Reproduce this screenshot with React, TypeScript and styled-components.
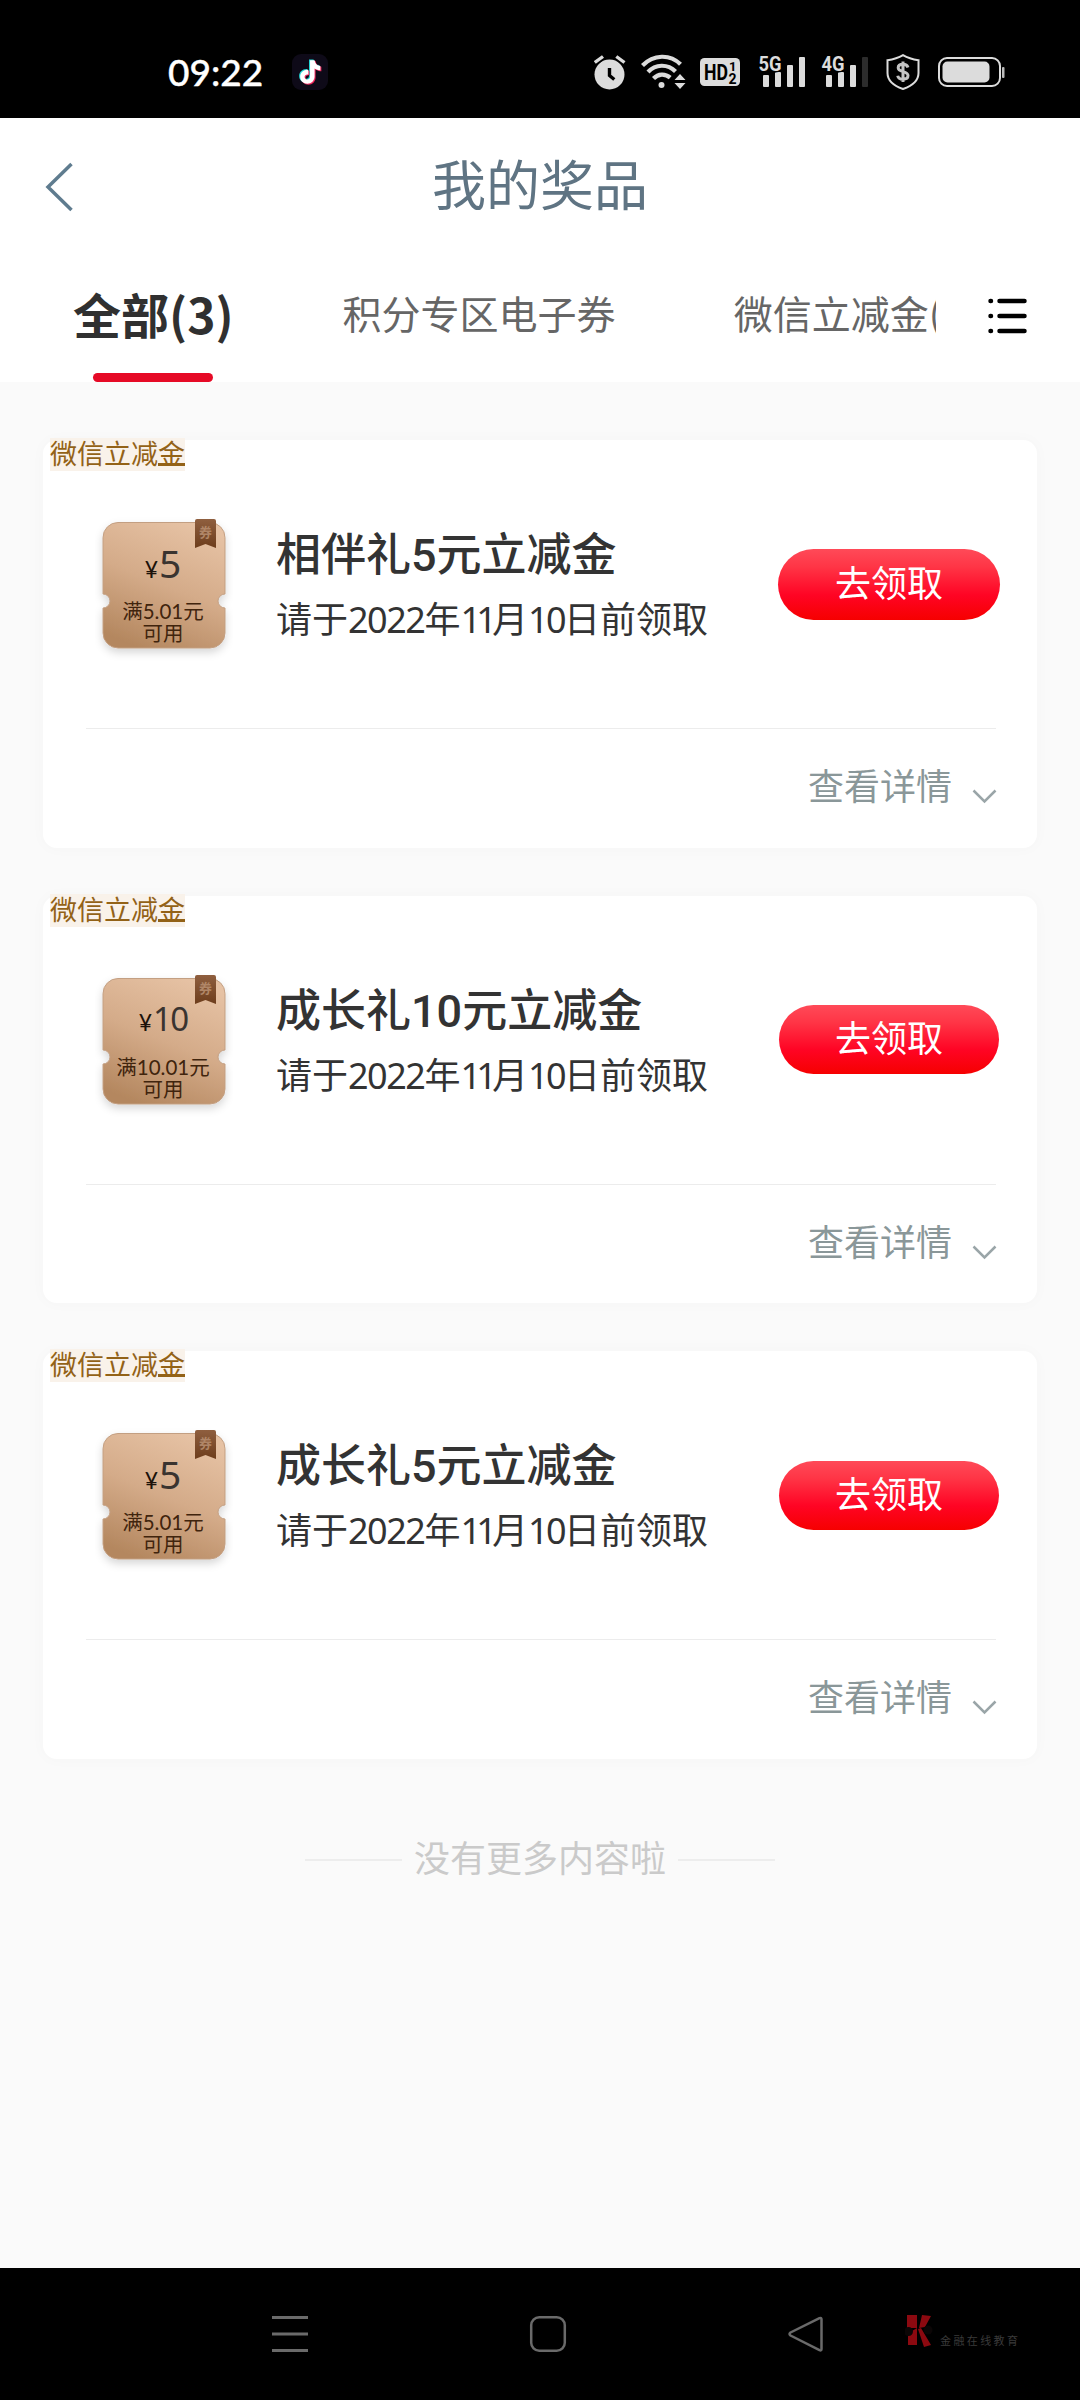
import React from "react";
import styled, { createGlobalStyle } from "styled-components";

const cjk = `"Noto Sans CJK SC", sans-serif`;

const GlobalStyle = createGlobalStyle`
  * { box-sizing: border-box; }
  body {
    margin: 0;
    background: #fafafa;
    font-family: Lato, ${cjk};
  }
`;

const Screen = styled.div`
  width: 1080px;
  height: 2400px;
  display: flex;
  flex-direction: column;
  overflow: hidden;
  background: #fafafa;
`;

/* ---------- status bar ---------- */

const StatusBar = styled.header`
  height: 118px;
  flex: none;
  display: flex;
  align-items: center;
  padding: 26px 75px 0 168px;
  background: #000;
`;

const Clock = styled.span`
  width: 124px;
  font: 500 37px/36px Lato, ${cjk};
  -webkit-text-stroke: 0.4px #fff;
  color: #fff;
`;

const StatusIcons = styled.div`
  margin-left: auto;
  display: flex;
  align-items: center;
`;

const StatusSlot = styled.span<{ $gap: number }>`
  display: flex;
  margin-left: ${(p) => p.$gap}px;
`;

const SignalArt = styled.svg`
  overflow: visible;
`;

/* ---------- title bar and tabs ---------- */

const TitleBar = styled.div`
  height: 138px;
  flex: none;
  display: grid;
  grid-template-columns: 120px 1fr 120px;
  align-items: center;
  background: #fff;
`;

const BackButton = styled.button`
  display: flex;
  padding: 0 0 0 44px;
  border: 0;
  background: none;
`;

const PageTitle = styled.h1`
  margin: 0;
  padding-bottom: 8px;
  text-align: center;
  font: 400 54px/60px ${cjk};
  color: #5f7483;
`;

const TabBar = styled.nav`
  height: 126px;
  flex: none;
  display: flex;
  background: #fff;
`;

const TabScroller = styled.div`
  width: 936px;
  display: flex;
  overflow: hidden;
  padding-left: 73px;
`;

const Tab = styled.div<{ $active?: boolean; $gap?: number }>`
  flex: none;
  display: flex;
  flex-direction: column;
  align-items: center;
  justify-content: space-between;
  margin-left: ${(p) => p.$gap ?? 0}px;
  padding-top: ${(p) => (p.$active ? 27 : 26)}px;
  white-space: nowrap;
  font-family: ${cjk};
  font-weight: ${(p) => (p.$active ? 700 : 400)};
  font-size: ${(p) => (p.$active ? 48 : 39)}px;
  line-height: 60px;
  color: ${(p) => (p.$active ? "#303030" : "#666")};
`;

const TabMarker = styled.span`
  width: 120px;
  height: 9px;
  border-radius: 5px;
  background: #e60a26;
`;

const ListButton = styled.button`
  display: flex;
  align-items: flex-start;
  padding: 41px 0 0 51px;
  border: 0;
  background: none;
`;

/* ---------- prize cards ---------- */

const Content = styled.main`
  flex: 1;
  display: flex;
  flex-direction: column;
  padding: 58px 43px 0;
`;

const CardList = styled.div`
  display: flex;
  flex-direction: column;
  gap: 48px;
`;

const Card = styled.article`
  height: 407.5px;
  display: flex;
  flex-direction: column;
  border-radius: 14px;
  background: #fff;
  box-shadow: 0 0 14px 2px rgba(0, 0, 0, 0.018);
`;

const Tag = styled.span`
  align-self: flex-start;
  height: 33px;
  margin: -2px 0 0 7px;
  background: #f9f2ea;
  font: 400 27px/29px ${cjk};
  color: #936217;
`;

const TagEnd = styled.span`
  text-decoration: underline;
  text-decoration-thickness: 3px;
  text-underline-offset: -1px;
  text-decoration-skip-ink: none;
`;

const CardBody = styled.div`
  height: 257px;
  display: flex;
  padding: 0 37px 0 52px;
`;

const Coupon = styled.div`
  position: relative;
  width: 138px;
  height: 150px;
  margin-top: 44px;
  flex: none;
`;

const CouponArt = styled.svg`
  position: absolute;
  inset: 0;
`;

const CouponText = styled.div`
  position: relative;
  display: flex;
  flex-direction: column;
  align-items: center;
  padding: 25px 2px 0 0;
`;

const Amount = styled.div`
  height: 60px;
  display: flex;
  align-items: baseline;
  color: #3a3430;
`;

const Yen = styled.span`
  font: 400 23px/46px Lato, ${cjk};
  color: #1c120a;
`;

const Value = styled.span<{ $size: number; $tight: number }>`
  margin-left: 1px;
  font: 400 ${(p) => p.$size}px/46px "Noto Sans", ${cjk};
  letter-spacing: ${(p) => p.$tight}px;
`;

const Condition = styled.div`
  text-align: center;
  white-space: nowrap;
  font: 400 20.5px/22px Lato, ${cjk};
  color: #40240d;
`;

const Info = styled.div`
  flex: 1;
  padding: 53px 0 0 43px;
  white-space: nowrap;
`;

const PrizeName = styled.h2`
  margin: 0;
  font: 500 45px/64px Roboto, ${cjk};
  color: #333;
`;

const Deadline = styled.p`
  margin: 0;
  font: 400 36px/58px ${cjk};
  color: #333;
`;

const Digits = styled.span<{ $tight: number }>`
  font-family: "Noto Sans", ${cjk};
  letter-spacing: ${(p) => p.$tight}px;
`;

const ClaimButton = styled.button<{ $inset: number }>`
  flex: none;
  width: ${(p) => 222 - p.$inset * 2}px;
  height: ${(p) => 71 - p.$inset * 2}px;
  margin: ${(p) => 78 + p.$inset * 0.5}px ${(p) => p.$inset}px 0 0;
  padding: 0 0 7px;
  border: 0;
  border-radius: 36px;
  background: linear-gradient(#ff4a58 0%, #ff3546 25%, #ff0424 65%, #f60000 100%);
  font: 400 36px/60px ${cjk};
  color: #fff;
`;

const CardFooter = styled.div`
  flex: 1;
  display: flex;
  align-items: flex-start;
  justify-content: flex-end;
  margin: 0 41px 0 43px;
  padding-top: 25px;
  border-top: 1px solid #ececec;
  font: 400 36px/60px ${cjk};
  color: #8a9799;
`;

const Chevron = styled.svg`
  margin: 35px -1px 0 20px;
`;

const EndNote = styled.div`
  display: flex;
  align-items: center;
  justify-content: center;
  gap: 12px;
  margin-top: 67px;
  font: 400 36px/60px ${cjk};
  color: #cacaca;

  &::before,
  &::after {
    content: "";
    width: 97px;
    height: 2px;
    margin-top: 8px;
    background: #ededed;
  }
`;

/* ---------- system navigation ---------- */

const NavBar = styled.footer`
  height: 132px;
  flex: none;
  display: flex;
  align-items: flex-start;
  padding: 47px 0 0 271px;
  background: #000;
`;

const NavSlot = styled.span<{ $gap: number }>`
  display: flex;
  margin-left: ${(p) => p.$gap}px;
`;

const Watermark = styled.span`
  display: flex;
  margin-left: 79px;
  font: 400 11px/14px ${cjk};
  letter-spacing: 2.4px;
  color: #3a3a3a;
`;

const WatermarkText = styled.span`
  margin: 18px 0 0 7px;
`;

/* ---------- drawings ---------- */

const note =
  "M18 8h4.4c.5 3.3 2.4 5.2 5.6 5.5v4.3c-2.100 0-4-.6-5.600-1.700v7.800c0 4-3.100 7-7 7s-7-3-7-6.800c0-4 3.500-7.200 8-6.700v4.500c-2-.5-3.700.6-3.700 2.300 0 1.500 1.200 2.500 2.600 2.500 1.600 0 2.700-1.100 2.700-2.900z";

const MusicApp = () => (
  <svg width="36" height="36" viewBox="0 0 36 36">
    <rect width="36" height="36" rx="9" fill="#0e0a18" />
    <g transform="translate(-.5 -2) scale(1.03)">
      <path d={note} fill="#25d8d8" transform="translate(-1 -.8)" />
      <path d={note} fill="#f0245a" transform="translate(1 .8)" />
      <path d={note} fill="#fff" />
    </g>
  </svg>
);

const Alarm = () => (
  <svg width="32" height="36" viewBox="0 0 32 36" fill="none">
    <circle cx="15.500" cy="20.500" r="15" fill="#dcdcdc" />
    <path d="M.8 8.500 9 2.500M30.500 8.500 22.300 2.500" stroke="#000" strokeWidth="6" />
    <path d="M.8 8.500 9 2.500M30.500 8.500 22.300 2.500" stroke="#dcdcdc" strokeWidth="3.400" />
    <path d="M15.500 14v7.500l4.800 4" stroke="#000" strokeWidth="3.400" />
  </svg>
);

const Wifi = () => (
  <svg width="46" height="36" viewBox="0 0 46 36" fill="none" stroke="#dcdcdc" strokeWidth="4.200">
    <path d="M1.500 11.500C12.500.300 29-.200 39.500 10.300" />
    <path d="M7 18C14.500 10 26.500 9.500 34.500 17.500" />
    <path d="M12.500 24.500c4.700-5 11.700-5.200 16.700-.8" />
    <circle cx="20.500" cy="31" r="3" fill="#dcdcdc" stroke="none" />
    <path d="M39 20l5.500 6h-11zM39 35l5.500-6h-11z" fill="#dcdcdc" stroke="none" />
  </svg>
);

const HdBadge = () => (
  <svg width="40" height="36" viewBox="0 0 40 36" fontFamily="Roboto, sans-serif" fontWeight="700">
    <rect y="4" width="40" height="28" rx="4.500" fill="#dcdcdc" />
    <text x="4" y="26" fontSize="22" textLength="24" lengthAdjust="spacingAndGlyphs">HD</text>
    <text x="29" y="16.500" fontSize="13">1</text>
    <text x="28.500" y="29.500" fontSize="14">2</text>
  </svg>
);

const Signal = ({ label, level }: { label: string; level: number }) => (
  <SignalArt width="48" height="36" viewBox="0 0 48 36">
    {[
      [5, 21],
      [17, 18],
      [29, 11],
      [41, 3],
    ].map(([x, y], i) => (
      <rect key={x} x={x} y={y} width="6" height={33 - y} rx="1" fill={i < level ? "#dcdcdc" : "#2c2c2c"} />
    ))}
    <text
      x="0.500"
      y="16.500"
      fontFamily="Roboto, sans-serif"
      fontWeight="700"
      fontSize="20"
      textLength="23"
      lengthAdjust="spacingAndGlyphs"
      fill="#dcdcdc"
      stroke="#000"
      strokeWidth="3"
      paintOrder="stroke"
    >
      {label}
    </text>
  </SignalArt>
);

const Shield = () => (
  <svg width="34" height="36" viewBox="0 0 34 36" fill="none" stroke="#dcdcdc">
    <path d="M17 1.200C21.500 4 26.500 5.500 32.500 6.200V19c0 8-6.500 12.800-15.500 16C8 31.800 1.500 27 1.500 19V6.200C7.500 5.500 12.500 4 17 1.200z" strokeWidth="2" />
    <path d="M22 13.500c-.8-2.300-2.600-3.200-5-3.200-2.800 0-4.800 1.300-4.800 3.500 0 5 9.800 2.700 9.800 7.800 0 2.400-2.200 3.700-5 3.700s-4.800-1.200-5.300-3.500M17 7.500v20.500" stroke="#c4c4c4" strokeWidth="3" />
  </svg>
);

const Battery = () => (
  <svg width="67" height="36" viewBox="0 0 67 36">
    <rect x="1" y="4" width="61" height="28" rx="8" fill="none" stroke="#dcdcdc" strokeWidth="2" />
    <rect x="4.500" y="7.500" width="47" height="21" rx="5" fill="#dcdcdc" />
    <rect x="64" y="13" width="2.500" height="11" rx="1" fill="#bbb" />
  </svg>
);

const CouponDrawing = () => (
  <CouponArt width="138" height="150" viewBox="0 0 138 150">
    <defs>
      <linearGradient id="bronze" x1="0.7" y1="0" x2="0.3" y2="1">
        <stop offset="0" stopColor="#e6c2a4" />
        <stop offset="0.5" stopColor="#d4ab89" />
        <stop offset="1" stopColor="#b4875f" />
      </linearGradient>
      <linearGradient id="ribbon" x1="0" y1="0" x2="0" y2="1">
        <stop offset="0" stopColor="#8f5f3f" />
        <stop offset="1" stopColor="#6d3d1c" />
      </linearGradient>
      <filter id="lift" x="-20%" y="-20%" width="140%" height="150%">
        <feDropShadow dx="0" dy="4" stdDeviation="4" floodColor="#000" floodOpacity="0.16" />
      </filter>
    </defs>
    <path
      d="M23 7.500h92a15 15 0 0 1 15 15v56.500a7 7 0 0 0 0 14v25a15 15 0 0 1-15 15h-92a15 15 0 0 1-15-15v-25a7 7 0 0 0 0-14v-56.500a15 15 0 0 1 15-15z"
      fill="url(#bronze)"
      stroke="#c39f82"
      filter="url(#lift)"
    />
    <path d="M102 4h17q2 0 2 2v27l-10.500-4-10.500 4V6q0-2 2-2z" fill="url(#ribbon)" />
    <text x="104" y="22" fontFamily="Noto Sans CJK SC, sans-serif" fontSize="13" fontWeight="700" fill="#b08667">
      券
    </text>
  </CouponArt>
);

type Prize = { name: string; amount: string; tight: number; size: number; min: string; inset: number };

const prizes: Prize[] = [
  { name: "相伴礼5元立减金", amount: "5", tight: 0, size: 39, min: "满5.01元", inset: 0 },
  { name: "成长礼10元立减金", amount: "10", tight: -1.8, size: 33, min: "满10.01元", inset: 1 },
  { name: "成长礼5元立减金", amount: "5", tight: 0, size: 39, min: "满5.01元", inset: 1 },
];

const PrizeCard = ({ prize }: { prize: Prize }) => (
  <Card>
    <Tag>
      微信立减<TagEnd>金</TagEnd>
    </Tag>
    <CardBody>
      <Coupon>
        <CouponDrawing />
        <CouponText>
          <Amount>
            <Yen>¥</Yen>
            <Value $size={prize.size} $tight={prize.tight}>{prize.amount}</Value>
          </Amount>
          <Condition>
            {prize.min}
            <br />
            可用
          </Condition>
        </CouponText>
      </Coupon>
      <Info>
        <PrizeName>{prize.name}</PrizeName>
        <Deadline>
          请于<Digits $tight={-1.5}>2022</Digits>年<Digits $tight={-4.8}>11</Digits>月
          <Digits $tight={-2.6}>10</Digits>日前领取
        </Deadline>
      </Info>
      <ClaimButton $inset={prize.inset}>去领取</ClaimButton>
    </CardBody>
    <CardFooter>
      查看详情
      <Chevron width="25" height="15" viewBox="0 0 25 15" fill="none" stroke="#9aa5a8" strokeWidth="2.500">
        <path d="M1.500 1.500 12.500 12.500 23.500 1.500" />
      </Chevron>
    </CardFooter>
  </Card>
);

export default function App() {
  return (
    <Screen>
      <GlobalStyle />
      <StatusBar>
        <Clock>09:22</Clock>
        <MusicApp />
        <StatusIcons>
          <StatusSlot $gap={0}><Alarm /></StatusSlot>
          <StatusSlot $gap={15}><Wifi /></StatusSlot>
          <StatusSlot $gap={13}><HdBadge /></StatusSlot>
          <StatusSlot $gap={18}><Signal label="5G" level={4} /></StatusSlot>
          <StatusSlot $gap={15}><Signal label="4G" level={3} /></StatusSlot>
          <StatusSlot $gap={17}><Shield /></StatusSlot>
          <StatusSlot $gap={18}><Battery /></StatusSlot>
        </StatusIcons>
      </StatusBar>
      <TitleBar>
        <BackButton aria-label="返回">
          <svg width="30" height="50" viewBox="0 0 30 50" fill="none" stroke="#5f7c8f" strokeWidth="3.500">
            <path d="M27.500 2 4 25 27.500 48" />
          </svg>
        </BackButton>
        <PageTitle>我的奖品</PageTitle>
      </TitleBar>
      <TabBar>
        <TabScroller>
          <Tab $active>
            全部(3)
            <TabMarker />
          </Tab>
          <Tab $gap={109}>积分专区电子券</Tab>
          <Tab $gap={118}>微信立减金(</Tab>
        </TabScroller>
        <ListButton aria-label="列表">
          <svg width="42" height="38" viewBox="0 0 42 38" fill="none" stroke="#000" strokeWidth="4.500" strokeLinecap="round">
            <path d="M3.500 4h.5M12.500 4h25M3.500 19h.5M12.500 19h25M3.500 34h.5M12.500 34h25" />
          </svg>
        </ListButton>
      </TabBar>
      <Content>
        <CardList>
          {prizes.map((prize) => (
            <PrizeCard key={prize.name} prize={prize} />
          ))}
        </CardList>
        <EndNote>没有更多内容啦</EndNote>
      </Content>
      <NavBar>
        <NavSlot $gap={0}>
          <svg width="38" height="38" viewBox="0 0 38 38" stroke="#6a6a6a" strokeWidth="3">
            <path d="M1 2.500h36M1 19h36M1 35.500h36" />
          </svg>
        </NavSlot>
        <NavSlot $gap={220}>
          <svg width="38" height="38" viewBox="0 0 38 38" fill="none" stroke="#6a6a6a" strokeWidth="2.500">
            <rect x="2.200" y="2.200" width="33.600" height="33.600" rx="8" />
          </svg>
        </NavSlot>
        <NavSlot $gap={221}>
          <svg width="38" height="38" viewBox="0 0 38 38" fill="none" stroke="#6a6a6a" strokeWidth="2.500" strokeLinejoin="round">
            <path d="M31.500 3.200 2.500 17.500q-2 1.500 0 3L31.500 35.200q2 .8 2-1.200V4.400q0-2-2-1.200z" />
          </svg>
        </NavSlot>
        <Watermark>
          <svg width="28" height="32" viewBox="0 0 28 32">
            <path d="M2 0h10v13H2zM17 0l9 1-6 11-6 1zM3 19l4-3 5-3v17H3zM13 14l3-1 10 17-7 2z" fill="#8c0910" />
            <circle cx="3.500" cy="16.500" r="4.500" fill="#0b0606" />
            <circle cx="23" cy="15" r="4.500" fill="#0b0606" />
          </svg>
          <WatermarkText>金融在线教育</WatermarkText>
        </Watermark>
      </NavBar>
    </Screen>
  );
}
